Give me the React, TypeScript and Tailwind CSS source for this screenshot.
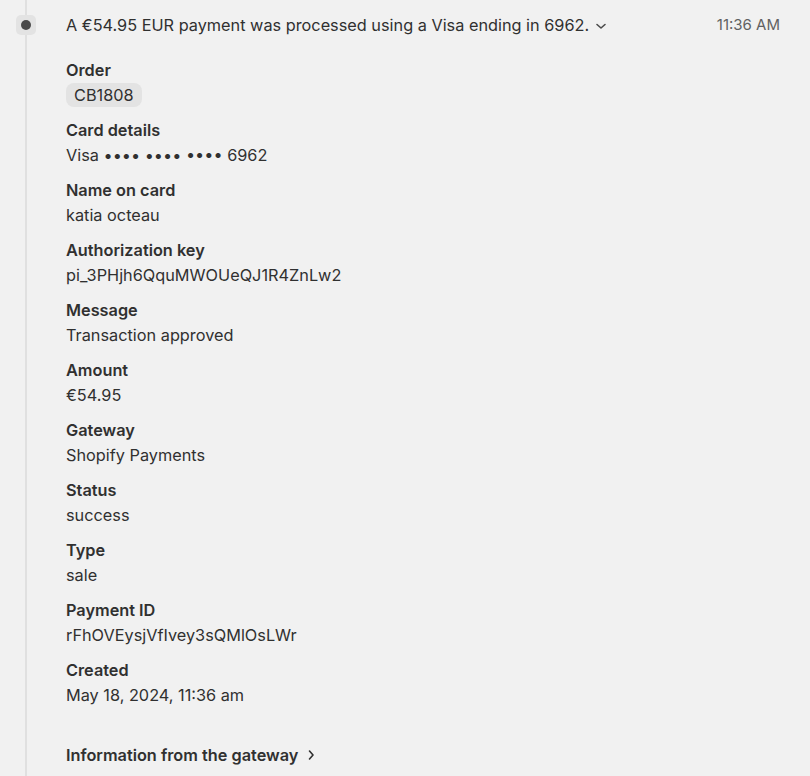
import React from 'react'

const rows: { label: string; value: string; badge?: boolean }[] = [
    { label: 'Order', value: 'CB1808', badge: true },
    { label: 'Card details', value: 'Visa •••• •••• •••• 6962' },
    { label: 'Name on card', value: 'katia octeau' },
    { label: 'Authorization key', value: 'pi_3PHjh6QquMWOUeQJ1R4ZnLw2' },
    { label: 'Message', value: 'Transaction approved' },
    { label: 'Amount', value: '€54.95' },
    { label: 'Gateway', value: 'Shopify Payments' },
    { label: 'Status', value: 'success' },
    { label: 'Type', value: 'sale' },
    { label: 'Payment ID', value: 'rFhOVEysjVfIvey3sQMlOsLWr' },
    { label: 'Created', value: 'May 18, 2024, 11:36 am' },
]

const ChevronDown = () => (
    <svg width="12" height="12" viewBox="0 0 12 12" fill="none" className="ml-[6px] mt-[1px]">
        <path d="M2 4.5 6 8 10 4.5" stroke="#4a4a4a" strokeWidth="1.6" strokeLinecap="round" strokeLinejoin="round" />
    </svg>
)

const ChevronRight = () => (
    <svg width="12" height="12" viewBox="0 0 12 12" fill="none" className="ml-[7px]">
        <path d="M4.5 2 8 6 4.5 10" stroke="#303030" strokeWidth="1.6" strokeLinecap="round" strokeLinejoin="round" />
    </svg>
)

export default function App() {
    return (
        <div
            className="min-h-[776px] w-[810px] bg-[#f1f1f1] flex text-[#303030] text-[16.3px] leading-[24px]"
            style={{ fontFamily: 'Inter, "Noto Sans", sans-serif' }}
        >
            {/* 时间线 */}
            <div className="w-[52px] flex flex-col items-center shrink-0">
                <div className="h-[15px] w-[2px] bg-[#e0e0e0]" />
                <div className="w-[20px] h-[20px] rounded-[5px] bg-[#e3e3e3] flex items-center justify-center">
                    <div className="w-[10px] h-[10px] rounded-full bg-[#4a4a4a]" />
                </div>
                <div className="flex-1 w-[2px] bg-[#e0e0e0]" />
            </div>

            {/* 内容 */}
            <div className="flex-1 pl-[14px] pr-[30px] pt-[13px]">
                <div className="flex items-center justify-between">
                    <div className="flex items-center">
                        <span>A €54.95 EUR payment was processed using a Visa ending in 6962.</span>
                        <ChevronDown />
                    </div>
                    <span className="text-[#616161] text-[15px]">11:36 AM</span>
                </div>

                <div className="mt-[21px] flex flex-col">
                    {rows.map((row) => (
                        <div key={row.label} className="mb-[11px]">
                            <div className="font-semibold">{row.label}</div>
                            <div className="mt-px">
                                {row.badge ? (
                                    <span className="inline-block rounded-lg bg-[#e3e3e3] px-[8px]">{row.value}</span>
                                ) : (
                                    row.value
                                )}
                            </div>
                        </div>
                    ))}
                </div>

                <div className="mt-[25px] flex items-center font-semibold pb-[9px]">
                    Information from the gateway
                    <ChevronRight />
                </div>
            </div>
        </div>
    )
}
